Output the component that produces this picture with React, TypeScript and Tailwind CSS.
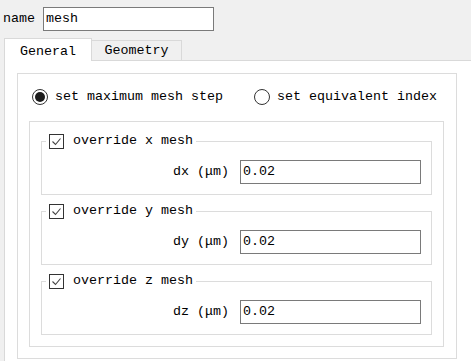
import React from "react";

const font = { fontFamily: '"Liberation Mono", "Noto Sans CJK SC", monospace' };

const Radio = ({ checked }: { checked?: boolean }) => (
  <span className="w-[16px] h-[16px] rounded-full border border-[#333] bg-white flex items-center justify-center shrink-0">
    {checked && <span className="w-[10px] h-[10px] rounded-full bg-[#1b1b1b]" />}
  </span>
);

const CheckBox = () => (
  <span className="w-[15px] h-[15px] border border-[#333] bg-white flex items-center justify-center shrink-0">
    <svg width="11" height="11" viewBox="0 0 11 11">
      <polyline points="1.5,5.5 4.5,8.5 9.5,2.5" fill="none" stroke="#444" strokeWidth="1.1" />
    </svg>
  </span>
);

const MeshGroup = ({ axis, first }: { axis: string; first?: boolean }) => (
  <fieldset
    className={`border border-[#dcdcdc] pl-[4px] pr-[10px] pb-[10px] ${first ? "" : "mt-[8px]"}`}
  >
    <legend className="h-[16px] flex items-center pl-[3px] pr-[3px] bg-white">
      <CheckBox />
      <span className="ml-[9px] text-[13.33px] leading-[16px] text-black whitespace-pre">
        override {axis} mesh
      </span>
    </legend>
    <div className="flex items-center justify-end mt-[11px]">
      <span className="text-[13.33px] leading-[16px] text-black mr-[11px] whitespace-pre">
        d{axis} (μm)
      </span>
      <div className="w-[181px] h-[24px] border border-[#7a7a7a] bg-white flex items-center pl-[2px] text-[13.33px] text-black">
        0.02
      </div>
    </div>
  </fieldset>
);

export default function App() {
  return (
    <div className="w-[471px] h-[361px] overflow-hidden bg-[#f0f0f0]" style={font}>
      <div className="flex items-center pt-[7px] pl-[3px]">
        <span className="text-[13.33px] text-black">name</span>
        <div className="ml-[8px] w-[171px] h-[24px] border border-[#7a7a7a] bg-white flex items-center pl-[2px] text-[13.33px] text-black">
          mesh
        </div>
      </div>

      <div className="flex items-end ml-[4px] mt-[7px]">
        <div className="relative z-10 -mb-px w-[88px] h-[23px] bg-white border-l border-t border-r border-[#d9d9d9] flex justify-center pt-[3px] text-[13.33px] text-black">
          General
        </div>
        <div className="w-[90px] h-[20px] bg-[#f0f0f0] border-t border-r border-[#d9d9d9] flex items-center justify-center text-[13.33px] text-black">
          Geometry
        </div>
      </div>

      <div className="ml-[4px] h-[320px] bg-white border-l border-t border-[#d9d9d9] pt-[12px] pl-[12px]">
        <div className="w-[440px] border border-[#dcdcdc] pt-[15px] pb-[11px]">
          <div className="flex items-center h-[16px] pl-[14px] text-[13.33px] text-black">
            <Radio checked />
            <span className="ml-[7px]">set maximum mesh step</span>
            <span className="ml-[31px]">
              <Radio />
            </span>
            <span className="ml-[7px]">set equivalent index</span>
          </div>

          <div className="ml-[11px] mt-[16px] w-[415px] border border-[#dcdcdc] pt-[11px] pb-[11px] px-[11px]">
            <MeshGroup axis="x" first />
            <MeshGroup axis="y" />
            <MeshGroup axis="z" />
          </div>
        </div>
      </div>
    </div>
  );
}
